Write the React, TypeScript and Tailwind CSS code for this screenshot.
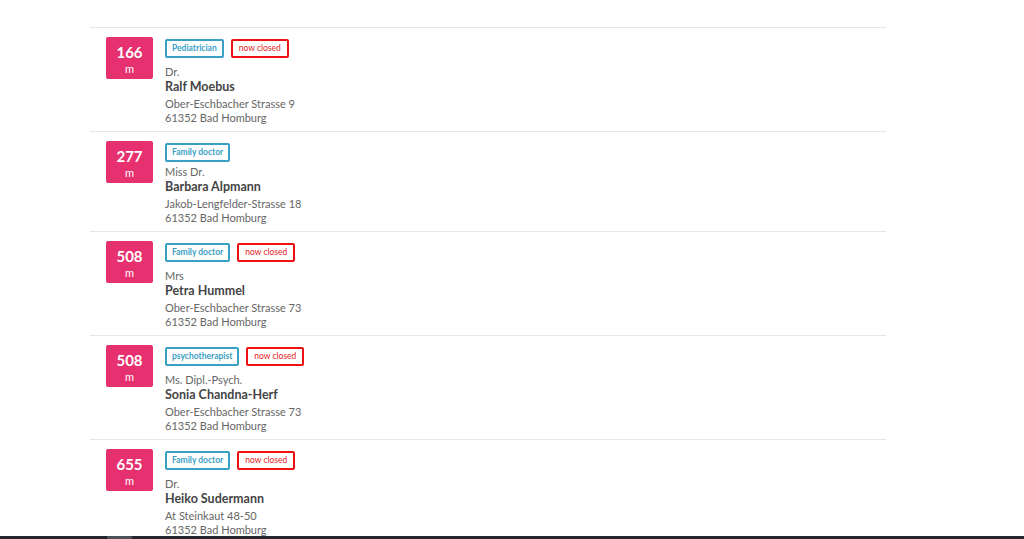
import React from 'react';

type Doctor = {
  distance: number;
  specialty: string;
  closed: boolean;
  title: string;
  name: string;
  street: string;
  city: string;
};

const doctors: Doctor[] = [
  {
    distance: 166,
    specialty: 'Pediatrician',
    closed: true,
    title: 'Dr.',
    name: 'Ralf Moebus',
    street: 'Ober-Eschbacher Strasse 9',
    city: '61352 Bad Homburg',
  },
  {
    distance: 277,
    specialty: 'Family doctor',
    closed: false,
    title: 'Miss Dr.',
    name: 'Barbara Alpmann',
    street: 'Jakob-Lengfelder-Strasse 18',
    city: '61352 Bad Homburg',
  },
  {
    distance: 508,
    specialty: 'Family doctor',
    closed: true,
    title: 'Mrs',
    name: 'Petra Hummel',
    street: 'Ober-Eschbacher Strasse 73',
    city: '61352 Bad Homburg',
  },
  {
    distance: 508,
    specialty: 'psychotherapist',
    closed: true,
    title: 'Ms. Dipl.-Psych.',
    name: 'Sonia Chandna-Herf',
    street: 'Ober-Eschbacher Strasse 73',
    city: '61352 Bad Homburg',
  },
  {
    distance: 655,
    specialty: 'Family doctor',
    closed: true,
    title: 'Dr.',
    name: 'Heiko Sudermann',
    street: 'At Steinkaut 48-50',
    city: '61352 Bad Homburg',
  },
];

function DoctorRow({ doctor }: { doctor: Doctor }) {
  return (
    <li className="flex border-t border-[#e6e6e6] pl-4 pt-[9px] pb-[6px]">
      {/* Distance badge */}
      <div className="flex h-[42px] w-[47px] shrink-0 flex-col items-center rounded-[2px] bg-[#e6306f] pt-[6px] text-white">
        <span className="text-[15px] font-bold leading-[18px]">{doctor.distance}</span>
        <span className="mt-px text-[11px] leading-[14px]">m</span>
      </div>

      {/* Details */}
      <div className="ml-3 pt-[2px]">
        <div className="mb-[3px] flex items-start gap-[7px]">
          <span className="flex h-[19px] items-center rounded-[2px] border-2 border-[#3a9fc5] px-[5px] text-[8.5px] font-bold text-[#3a9fc5]">
            {doctor.specialty}
          </span>
          {doctor.closed && (
            <span className="mb-1 flex h-[19px] items-center rounded-[2px] border-2 border-[#ee1111] px-[6px] text-[8.5px] text-[#e52222]">
              now closed
            </span>
          )}
        </div>
        <div className="text-[11px] leading-[14px] text-[#666666]">{doctor.title}</div>
        <div className="text-[12.5px] font-bold leading-[15px] text-[#444444]">{doctor.name}</div>
        <div className="mt-[3px] text-[11px] leading-[14px] text-[#666666]">{doctor.street}</div>
        <div className="text-[11px] leading-[14px] text-[#666666]">{doctor.city}</div>
      </div>
    </li>
  );
}

export default function App() {
  return (
    <div
      className="flex h-[539px] w-[1024px] flex-col overflow-hidden bg-white"
      style={{ fontFamily: 'Lato, "Noto Sans", sans-serif' }}
    >
      <div className="flex-1 overflow-hidden">
        <ul className="ml-[90px] mt-[27px] w-[796px]">
          {doctors.map((d, i) => (
            <DoctorRow key={i} doctor={d} />
          ))}
        </ul>
      </div>

      {/* Bottom scrollbar strip */}
      <div className="flex h-[3px] shrink-0 bg-[#23272b]">
        <div className="ml-[107px] w-[25px] bg-[#4c5157]" />
      </div>
    </div>
  );
}
